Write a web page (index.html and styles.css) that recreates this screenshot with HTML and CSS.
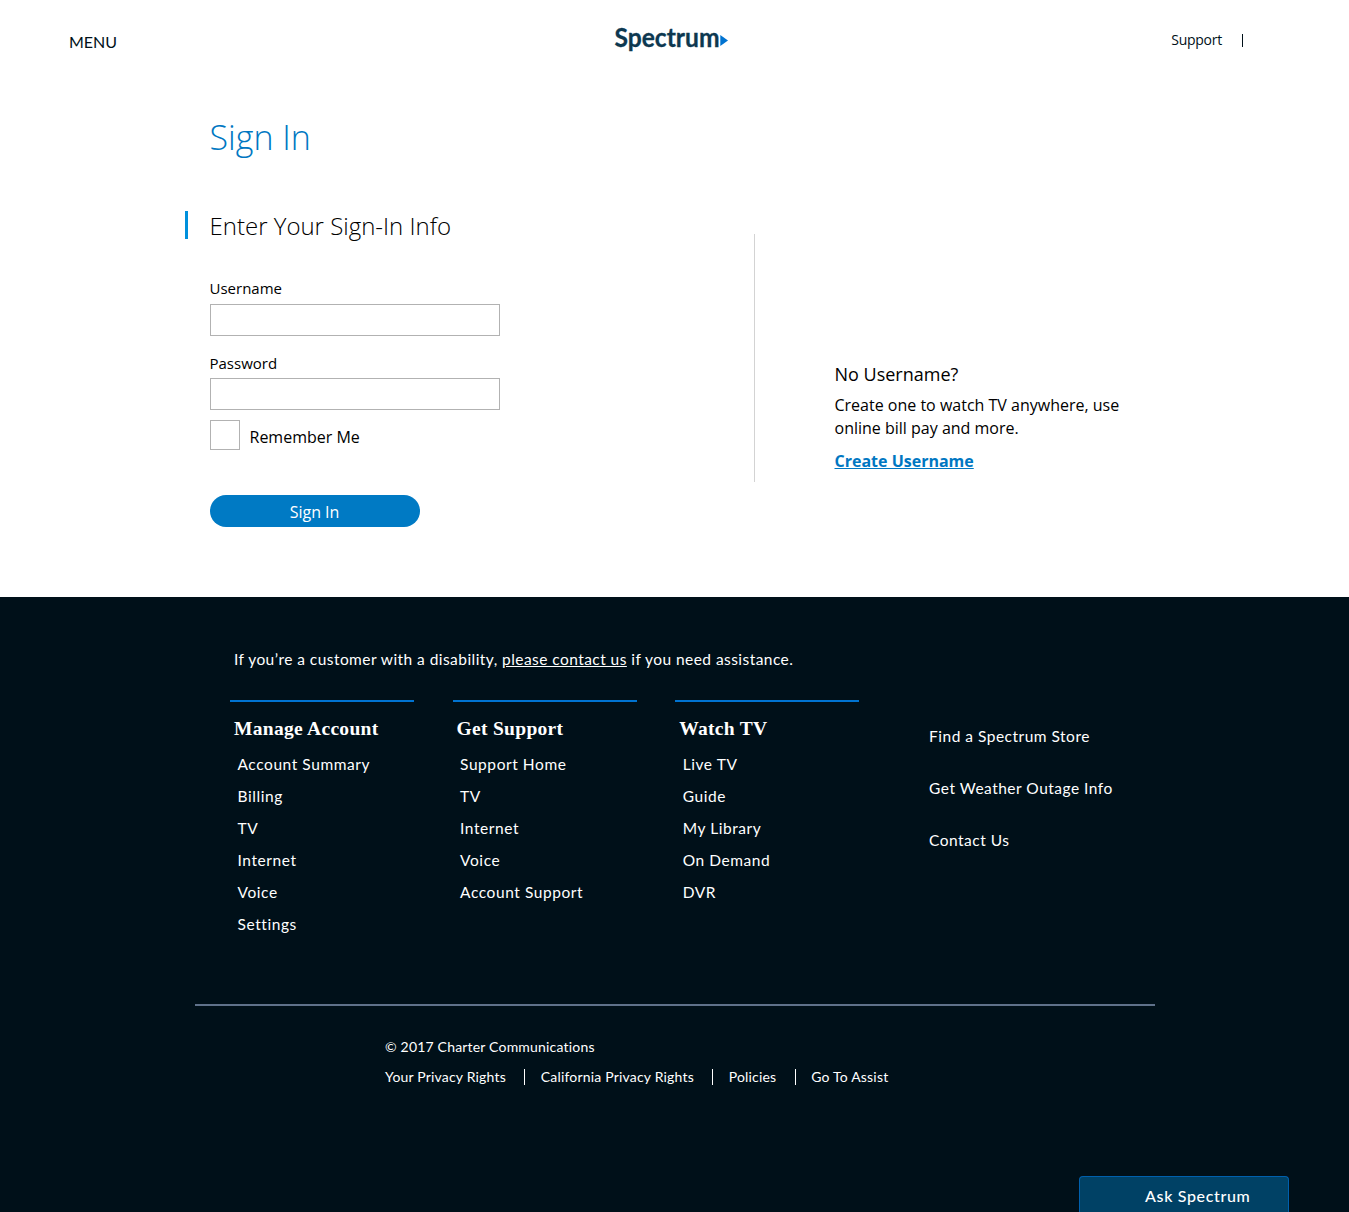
FILE: index.html
```html
<!DOCTYPE html>
<html lang="en">
<head>
<meta charset="utf-8">
<title>Sign In</title>
<link rel="stylesheet" href="styles.css">
</head>
<body>
<header class="header">
  <a class="menu">MENU</a>
  <svg class="logo" width="114" height="28" viewBox="0 0 114 28" role="img" aria-label="Spectrum">
    <text class="logo-text" x="0.500" y="20.500" textLength="105" lengthAdjust="spacingAndGlyphs">Spectrum</text>
    <path d="M106.300 9 114 14.500 106.300 20Z" fill="#0073d1"/>
  </svg>
  <div class="tools"><a class="support">Support</a><span class="tools-bar"></span></div>
</header>
<main class="main">
  <h1 class="title">Sign In</h1>
  <div class="columns">
    <form class="form">
      <h2 class="subtitle">Enter Your Sign-In Info</h2>
      <label class="label" for="user">Username</label>
      <input class="input" id="user" type="text">
      <label class="label label-second" for="pass">Password</label>
      <input class="input" id="pass" type="password">
      <label class="remember"><input class="check" type="checkbox"><span>Remember Me</span></label>
      <button class="submit" type="button">Sign In</button>
    </form>
    <aside class="aside">
      <h3 class="aside-title">No Username?</h3>
      <p class="aside-text">Create one to watch TV anywhere, use<br>online bill pay and more.</p>
      <a class="create">Create Username</a>
    </aside>
  </div>
</main>
<footer class="footer">
  <p class="access">If you’re a customer with a disability, <a class="contact">please contact us</a> if you need assistance.</p>
  <div class="links">
    <section class="group">
      <h4 class="group-title">Manage Account</h4>
      <ul class="list"><li>Account Summary</li><li>Billing</li><li>TV</li><li>Internet</li><li>Voice</li><li>Settings</li></ul>
    </section>
    <section class="group">
      <h4 class="group-title">Get Support</h4>
      <ul class="list"><li>Support Home</li><li>TV</li><li>Internet</li><li>Voice</li><li>Account Support</li></ul>
    </section>
    <section class="group">
      <h4 class="group-title">Watch TV</h4>
      <ul class="list"><li>Live TV</li><li>Guide</li><li>My Library</li><li>On Demand</li><li>DVR</li></ul>
    </section>
    <ul class="extra"><li>Find a Spectrum Store</li><li>Get Weather Outage Info</li><li>Contact Us</li></ul>
  </div>
  <div class="legal">
    <p class="copy">© 2017 Charter Communications</p>
    <ul class="policies"><li>Your Privacy Rights</li><li>California Privacy Rights</li><li>Policies</li><li>Go To Assist</li></ul>
  </div>
</footer>
<a class="ask">Ask Spectrum</a>
</body>
</html>
```
FILE: styles.css
```css
* { box-sizing: border-box; margin: 0; padding: 0; }
body { height: 1212px; overflow: hidden; background: #fff; color: #000; font-family: "Open Sans", sans-serif; }
ul { list-style: none; }
.header { height: 80px; padding: 0 105px 0 69px; display: grid; grid-template-columns: 545px 1fr auto; align-items: start; color: #001019; }
.menu { margin-top: 32px; font: 16px/20px Lato, sans-serif; }
.logo { margin-top: 26px; overflow: visible; }
.logo-text { font: 700 26px Lato, sans-serif; fill: #0d3850; stroke: #0d3850; stroke-width: .3px; }
.tools { display: flex; align-items: center; gap: 20px; margin-top: 30px; }
.support { font: 14px/20px "Open Sans", sans-serif; letter-spacing: -.25px; }
.tools-bar { width: 1px; height: 13px; margin-right: 1px; background: #001019; }
.main { height: 517px; padding: 34px 0 0 184.5px; }
.title { padding-left: 25px; font-size: 34px; line-height: 46px; font-weight: 300; color: #0077c2; }
.columns { display: flex; margin-top: 51px; }
.form { width: 569px; display: flex; flex-direction: column; align-items: flex-start; }
.subtitle { height: 28px; padding-left: 22px; border-left: 3px solid #0090dc; font-size: 24px; line-height: 30px; font-weight: 300; white-space: nowrap; }
.label { margin: 39px 0 0 25px; font-size: 15px; line-height: 20px; }
.label-second { margin-top: 17px; }
.input { width: 290px; height: 32px; margin: 6px 0 0 25px; border: 1px solid #b2b2b2; background: #fff; }
.label-second + .input { margin-top: 5px; }
.remember { display: flex; gap: 10px; margin: 10px 0 0 25px; font-size: 16px; line-height: 34px; height: 30px; }
.check { appearance: none; width: 30px; height: 30px; border: 1px solid #b2b2b2; }
.submit { width: 210px; height: 32px; margin: 45px 0 0 25px; padding-top: 2px; border: 0; border-radius: 16px; background: #007ac4; color: #fff; font: 16px/30px "Open Sans", sans-serif; }
.aside { height: 248px; margin-top: 23px; padding: 128px 0 0 80px; border-left: 1px solid #d3d3d3; }
.aside-title { font-size: 18px; line-height: 24px; font-weight: 400; }
.aside-text { margin-top: 8px; font-size: 16px; line-height: 23px; }
.create { display: block; margin-top: 9px; font-size: 16px; line-height: 24px; font-weight: 700; color: #0077c2; text-decoration: underline; }
.footer { height: 615px; padding: 51px 194px 0 195px; background: #001019; color: #fff; font: 15px/22px Lato, sans-serif; letter-spacing: .72px; }
.access { padding-left: 39px; font-size: 15.5px; letter-spacing: .445px; }
.contact { text-decoration: underline; }
.links { display: flex; gap: 38.4px; height: 306px; margin-top: 30px; padding-left: 35px; border-bottom: 2px solid #5f718a; }
.group { width: 184.2px; border-top: 2px solid #0073d1; height: 240px; }
.group-title { margin: 15px 0 0 4px; font: 700 19.5px/24px "Liberation Serif", serif; letter-spacing: .3px; }
.list { padding: 7px 0 0 7.5px; line-height: 32px; font-size: 15.5px; letter-spacing: .57px; }
.extra { margin: 26px 0 0 31.3px; line-height: 20px; display: flex; flex-direction: column; gap: 32px; font-size: 15.5px; letter-spacing: .5px; }
.legal { padding: 30px 0 0 190px; font-size: 14px; letter-spacing: .19px; }
.policies { display: flex; margin-top: 8px; }
.policies li { display: flex; align-items: center; }
.policies li + li::before { content: ""; width: 1px; height: 16px; margin: 0 15.5px 0 18.3px; background: #fff; }
.ask { position: fixed; left: 1079px; bottom: 0; width: 210px; height: 36px; padding: 9px 0 0 65px; border: 1px solid #0060ad; border-bottom: 0; border-radius: 4px 4px 0 0; background: #004165; color: #fff; font: 500 16px/20px Lato, sans-serif; letter-spacing: .65px; }
```
